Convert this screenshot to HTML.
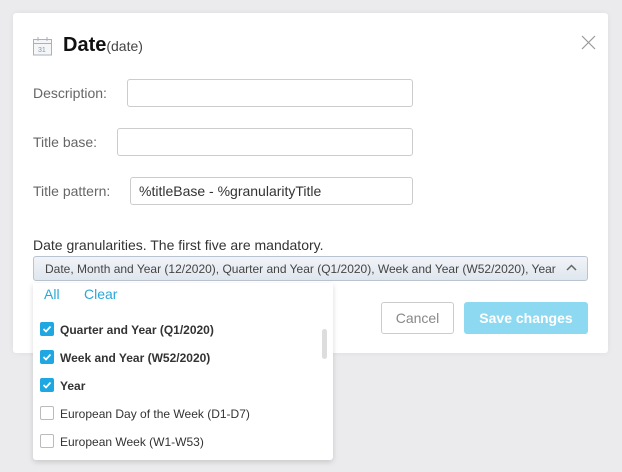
<!DOCTYPE html>
<html><head><meta charset="utf-8"><style>
*{box-sizing:border-box;margin:0;padding:0}
body{width:622px;height:472px;background:#ebebed;font-family:"Liberation Sans",sans-serif;position:relative;overflow:hidden}
.modal{position:absolute;left:13px;top:13px;width:595px;height:340px;background:#fff;border-radius:3px;box-shadow:0 0 6px rgba(0,0,0,.06)}
.abs{position:absolute}
.lbl{position:absolute;font-size:14px;color:#666}
.inp{position:absolute;height:28px;border:1px solid #ccc;border-radius:3px;background:#fff;font-size:14px;color:#333;padding:5px 8px}
</style></head><body>
<div class="modal"></div>
<svg class="abs" style="left:33px;top:37px" width="20" height="19" viewBox="0 0 20 19"><rect x="0.5" y="2.5" width="18" height="15.5" fill="#f4f6f8" stroke="#a9b2bc"/><line x1="0.5" y1="6.5" x2="18.5" y2="6.5" stroke="#a9b2bc"/><line x1="5" y1="0" x2="5" y2="4" stroke="#a9b2bc"/><line x1="14" y1="0" x2="14" y2="4" stroke="#a9b2bc"/><text x="5" y="15" font-size="7" fill="#8a96a3" font-family="Liberation Sans">31</text></svg>
<div class="abs" style="left:63px;top:34px;font-size:20px;font-weight:bold;color:#111">Date<span style="font-size:14px;font-weight:normal;color:#444">(date)</span></div>
<svg class="abs" style="left:581px;top:35px" width="15" height="15"><path d="M1 1L14 14M14 1L1 14" stroke="#999" stroke-width="1.2"/></svg>
<div class="lbl" style="left:33px;top:85px">Description:</div>
<div class="inp" style="left:127px;top:79px;width:286px"></div>
<div class="lbl" style="left:33px;top:134px">Title base:</div>
<div class="inp" style="left:117px;top:128px;width:296px"></div>
<div class="lbl" style="left:33px;top:183px">Title pattern:</div>
<div class="inp" style="left:130px;top:177px;width:283px">%titleBase - %granularityTitle</div>
<div class="abs" style="left:33px;top:237px;font-size:14px;color:#333">Date granularities. The first five are mandatory.</div>
<div class="abs" style="left:33px;top:256px;width:555px;height:25px;border:1px solid #b9c4d0;border-radius:3px;background:linear-gradient(#f1f4f8,#dfe6ee);font-size:12px;color:#444;padding:5px 11px;white-space:nowrap">Date, Month and Year (12/2020), Quarter and Year (Q1/2020), Week and Year (W52/2020), Year</div>
<svg class="abs" style="left:566px;top:264px" width="11" height="8"><path d="M1 6L5.5 1.5L10 6" fill="none" stroke="#666" stroke-width="1.5"/></svg>
<div class="abs" style="left:381px;top:302px;width:73px;height:32px;border:1px solid #ccc;border-radius:3px;font-size:14px;color:#888;text-align:center;line-height:30px">Cancel</div>
<div class="abs" style="left:464px;top:302px;width:124px;height:32px;border-radius:3px;background:#8ed9f2;font-size:14px;font-weight:bold;color:#fff;text-align:center;line-height:32px">Save changes</div>
<div class="abs" style="left:33px;top:283px;width:300px;height:177px;background:#fff;border-radius:0 0 3px 3px;box-shadow:0 2px 6px rgba(0,0,0,.15)">
<div class="abs" style="left:11px;top:3px;font-size:14px;color:#2aa8d8">All</div>
<div class="abs" style="left:51px;top:3px;font-size:14px;color:#2aa8d8">Clear</div>
<div class="abs" style="left:289px;top:46px;width:5px;height:30px;background:#ddd;border-radius:3px"></div>
</div>
<div class="abs" style="left:40px;top:316px;font-size:12px;color:#333;line-height:28px">
<div><span style="display:inline-block;width:14px;height:14px;background:#1fa7e1;border-radius:2px;vertical-align:-2px;margin-right:6px;position:relative"><svg width="14" height="14" style="position:absolute;left:0;top:0"><path d="M3.5 7L6 9.5L10.5 4.5" fill="none" stroke="#fff" stroke-width="1.7"/></svg></span><b>Quarter and Year (Q1/2020)</b></div>
<div><span style="display:inline-block;width:14px;height:14px;background:#1fa7e1;border-radius:2px;vertical-align:-2px;margin-right:6px;position:relative"><svg width="14" height="14" style="position:absolute;left:0;top:0"><path d="M3.5 7L6 9.5L10.5 4.5" fill="none" stroke="#fff" stroke-width="1.7"/></svg></span><b>Week and Year (W52/2020)</b></div>
<div><span style="display:inline-block;width:14px;height:14px;background:#1fa7e1;border-radius:2px;vertical-align:-2px;margin-right:6px;position:relative"><svg width="14" height="14" style="position:absolute;left:0;top:0"><path d="M3.5 7L6 9.5L10.5 4.5" fill="none" stroke="#fff" stroke-width="1.7"/></svg></span><b>Year</b></div>
<div><span style="display:inline-block;width:14px;height:14px;border:1px solid #bbb;border-radius:2px;vertical-align:-2px;margin-right:6px"></span>European Day of the Week (D1-D7)</div>
<div><span style="display:inline-block;width:14px;height:14px;border:1px solid #bbb;border-radius:2px;vertical-align:-2px;margin-right:6px"></span>European Week (W1-W53)</div>
</div>
</body></html>
